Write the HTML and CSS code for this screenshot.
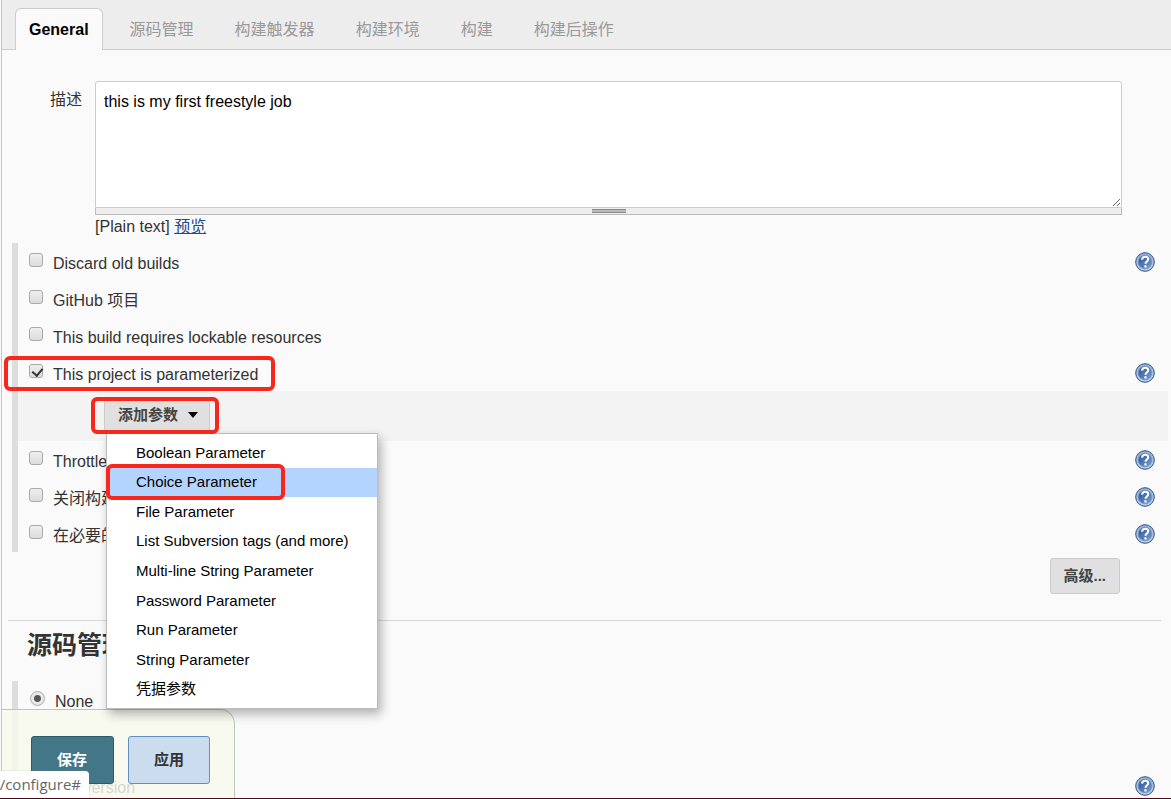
FILE: index.html
```html
<!DOCTYPE html>
<html lang="zh-CN">
<head>
<meta charset="utf-8">
<title>Config</title>
<link rel="stylesheet" href="styles.css">
</head>
<body>
<svg class="defs" aria-hidden="true">
  <defs>
    <linearGradient id="rim" x1="0" y1="0" x2="0" y2="1">
      <stop offset="0" stop-color="#8fb0dc"/><stop offset="1" stop-color="#b4d3e8"/>
    </linearGradient>
    <linearGradient id="ball" x1="0" y1="0" x2="1" y2="1">
      <stop offset="0" stop-color="#2d4f93"/><stop offset="1" stop-color="#7aa0d0"/>
    </linearGradient>
    <symbol id="help" viewBox="0 0 20 20">
      <circle cx="10" cy="10" r="9.3" fill="url(#rim)" stroke="#35507e" stroke-width="1"/>
      <circle cx="10" cy="10" r="6.8" fill="url(#ball)" stroke="#6f90c2" stroke-width=".6"/>
      <path d="M7 7.6C7.2 5.6 8.5 4.8 10.2 4.8c1.8 0 3 1 3 2.5 0 2.2-2.7 2.2-2.7 4.5" fill="none" stroke="#fff" stroke-width="2.1"/>
      <rect x="9.3" y="13.2" width="2.3" height="2.3" rx=".5" fill="#fff"/>
    </symbol>
  </defs>
</svg>
<div class="page">
  <nav class="tabs">
    <a class="tab tab-active" href="#general">General</a>
    <a class="tab" href="#scm">源码管理</a>
    <a class="tab" href="#triggers">构建触发器</a>
    <a class="tab" href="#env">构建环境</a>
    <a class="tab" href="#build">构建</a>
    <a class="tab" href="#post">构建后操作</a>
  </nav>
  <main class="form">
    <div class="description">
      <label class="description-label" for="desc">描述</label>
      <div class="description-field">
        <textarea id="desc" class="textarea">this is my first freestyle job</textarea>
        <div class="grip"><span class="grip-handle"></span></div>
        <div class="preview">[Plain text] <a href="#preview">预览</a></div>
      </div>
    </div>

    <section class="options">
      <div class="row"><label class="option"><input type="checkbox" class="check"><span>Discard old builds</span></label><button class="help" aria-label="Help"><svg><use href="#help"/></svg></button></div>
      <div class="row"><label class="option"><input type="checkbox" class="check"><span>GitHub 项目</span></label></div>
      <div class="row"><label class="option"><input type="checkbox" class="check"><span>This build requires lockable resources</span></label></div>
      <div class="row"><label class="option"><input type="checkbox" class="check" checked><span>This project is parameterized</span></label><button class="help" aria-label="Help"><svg><use href="#help"/></svg></button><span class="mark mark-option"></span></div>
      <div class="params">
        <div class="dropdown">
          <button class="add">添加参数 <span class="caret"></span></button>
          <span class="mark mark-add"></span>
          <ul class="menu">
            <li><a href="#">Boolean Parameter</a></li>
            <li class="selected"><a href="#">Choice Parameter</a><span class="mark mark-choice"></span></li>
            <li><a href="#">File Parameter</a></li>
            <li><a href="#">List Subversion tags (and more)</a></li>
            <li><a href="#">Multi-line String Parameter</a></li>
            <li><a href="#">Password Parameter</a></li>
            <li><a href="#">Run Parameter</a></li>
            <li><a href="#">String Parameter</a></li>
            <li><a href="#">凭据参数</a></li>
          </ul>
        </div>
      </div>
      <div class="row"><label class="option"><input type="checkbox" class="check"><span>Throttle</span></label><button class="help" aria-label="Help"><svg><use href="#help"/></svg></button></div>
      <div class="row"><label class="option"><input type="checkbox" class="check"><span>关闭构建</span></label><button class="help" aria-label="Help"><svg><use href="#help"/></svg></button></div>
      <div class="row"><label class="option"><input type="checkbox" class="check"><span>在必要的</span></label><button class="help" aria-label="Help"><svg><use href="#help"/></svg></button></div>
    </section>
    <div class="advanced"><button class="advanced-button">高级...</button></div>

    <h2 class="heading">源码管理</h2>
    <section class="options scm">
      <div class="row"><label class="option"><input type="radio" name="scm" class="radio" checked><span>None</span></label></div>
      <div class="row"><label class="option"><input type="radio" name="scm" class="radio"><span>Subversion</span></label><button class="help" aria-label="Help"><svg><use href="#help"/></svg></button></div>
    </section>
  </main>
</div>
<div class="actions">
  <button class="save">保存</button>
  <button class="apply">应用</button>
</div>
<div class="status"><span>/configure#</span></div>
</body>
</html>
```
FILE: styles.css
```css
* { box-sizing: border-box; }
body {
  margin: 0;
  height: 100vh;
  overflow: hidden;
  position: relative;
  border-bottom: 1px solid #4a0a1c;
  background: #fafafa;
  color: #333;
  font: 16px/24px "Liberation Sans", "Noto Sans CJK SC", sans-serif;
}
button, textarea { font: inherit; color: inherit; }
.defs { position: absolute; width: 0; height: 0; }
.page { margin-left: 1px; border-left: 1px solid #c4c7c8; }

.tabs {
  display: flex;
  gap: 13px;
  height: 50px;
  padding: 8px 13px 0;
  background: #ededed;
  border-bottom: 1px solid #ccc;
}
.tab {
  height: 42px;
  padding: 0 13px;
  border: 1px solid transparent;
  border-bottom: 0;
  line-height: 41px;
  color: #999;
  text-decoration: none;
}
.tab-active {
  background: #fafafa;
  border-color: #ccc;
  border-radius: 6px 6px 0 0;
  color: #000;
  font-weight: bold;
}

.form { padding: 31px 3px 0 10px; }
.description { display: flex; gap: 12px; padding: 0 46px 0 38px; }
.description-label { padding-top: 7px; flex: none; }
.description-field { flex: 1; margin-left: 1px; }
.textarea {
  display: block;
  width: 100%;
  height: 127px;
  padding: 8px;
  border: 1px solid #ccc;
  border-radius: 3px 3px 0 0;
  outline: 0;
  background: #fff;
  color: #000;
  resize: vertical;
}
.grip {
  display: flex;
  justify-content: center;
  height: 7px;
  padding-top: 1px;
  border: 1px solid #bbb;
  border-top: 0;
  background: #eee;
}
.grip-handle { width: 34px; height: 4px; border: solid #888; border-width: 1px 0; background: #bbb; }
.preview { padding-bottom: 4px; }
.preview a { color: #204a87; }

.options { border-left: 6px solid #ddd; }
.row {
  position: relative;
  display: flex;
  justify-content: space-between;
  height: 37px;
  padding: 0 13px 0 11px;
}
.option { display: flex; gap: 11px; padding-top: 9px; }
.check, .radio {
  appearance: none;
  flex: none;
  width: 14px;
  height: 14px;
  margin: 1px 0 0;
  border: 1px solid #aaa;
  border-radius: 3px;
  background: linear-gradient(#eee, #dcdcdc);
}
.option .check + span { margin-left: -1px; }
.check:checked::after {
  content: "";
  display: block;
  width: 5px;
  height: 8px;
  margin: 1px 0 0 4px;
  border: solid #333;
  border-width: 0 2px 2px 0;
  transform: rotate(40deg);
}
.radio { width: 15px; height: 15px; margin: 1px 0 0 1px; border-radius: 50%; }
.radio:checked { background: radial-gradient(circle, #555 0 3px, #e8e8e8 4px); }
.scm .option { gap: 10px; }
.help { width: 20px; height: 20px; margin-top: 9px; padding: 0; border: 0; background: none; }
.help svg { display: block; width: 20px; height: 20px; }

.params { height: 50px; padding: 6px 0 0 86px; background: #f3f3f3; }
.dropdown { position: relative; display: inline-block; }
.add {
  display: flex;
  align-items: center;
  gap: 10px;
  height: 36px;
  padding: 0 11px 0 13px;
  border: 1px solid #ccc;
  background: #e0e0e0;
  font-size: 15px;
  font-weight: bold;
  color: #444;
}
.caret { border: solid transparent; border-width: 6px 5px 0; border-top-color: #000; }
.menu {
  position: absolute;
  z-index: 2;
  top: 36px;
  left: 2px;
  display: flex;
  flex-direction: column;
  width: 272px;
  min-height: 276px;
  margin: 0;
  padding: 4px 0;
  border: 1px solid #bbb;
  background: #fff;
  box-shadow: 3px 5px 10px rgba(0, 0, 0, .3);
  list-style: none;
  font-size: 15px;
}
.menu li { position: relative; flex: 1; display: flex; align-items: center; padding-left: 29px; }
.menu a { color: #000; text-decoration: none; }
.menu .selected { background: #b3d4ff; }

.mark {
  position: absolute;
  border: 4px solid #f9261b;
  border-radius: 6px;
  pointer-events: none;
}
.mark-option { top: 2px; left: -14px; width: 271px; height: 35px; z-index: 1; }
.mark-add { top: 0; left: -13px; width: 128px; height: 37px; z-index: 3; }
.mark-choice { top: -4px; left: -1px; width: 179px; height: 36px; }

.advanced { display: flex; justify-content: flex-end; padding: 6px 48px 26px 0; }
.advanced-button {
  height: 36px;
  padding: 0 13px 0 12px;
  border: 1px solid #ccc;
  border-radius: 3px;
  background: #e0e0e0;
  font-size: 15px;
  font-weight: bold;
  color: #444;
}
.heading {
  margin: 0 7px 0 -4px;
  padding: 6px 19px 18px;
  border-top: 1px solid #d5d8d5;
  font-size: 25px;
  line-height: 36px;
}
.scm { display: grid; gap: 49px; }

.actions {
  position: absolute;
  left: 2px;
  bottom: 0;
  display: flex;
  align-items: flex-start;
  gap: 14px;
  padding: 26px 24px 14px 29px;
  border: 1px solid #bbc5bb;
  border-width: 1px 1px 0 0;
  border-radius: 0 15px 0 0;
  background: rgba(248, 250, 238, .82);
}
.actions button {
  height: 48px;
  padding: 0 25px;
  border: 1px solid #2d5c68;
  border-radius: 3px;
  font-size: 15px;
  font-weight: bold;
}
.actions .save { padding-right: 26px; background: #437687; color: #fff; }
.actions .apply { border-color: #5f8ec0; background: #cbdcee; color: #333; }
.status {
  position: absolute;
  left: 0;
  bottom: 0;
  display: flex;
  justify-content: flex-end;
  width: 89px;
  height: 27px;
  overflow: hidden;
  padding-right: 8px;
  border-radius: 0 4px 0 0;
  background: #fff;
  box-shadow: 0 0 1px #888;
  font: 15px/27px "Open Sans", sans-serif;
  color: #666;
}
```
